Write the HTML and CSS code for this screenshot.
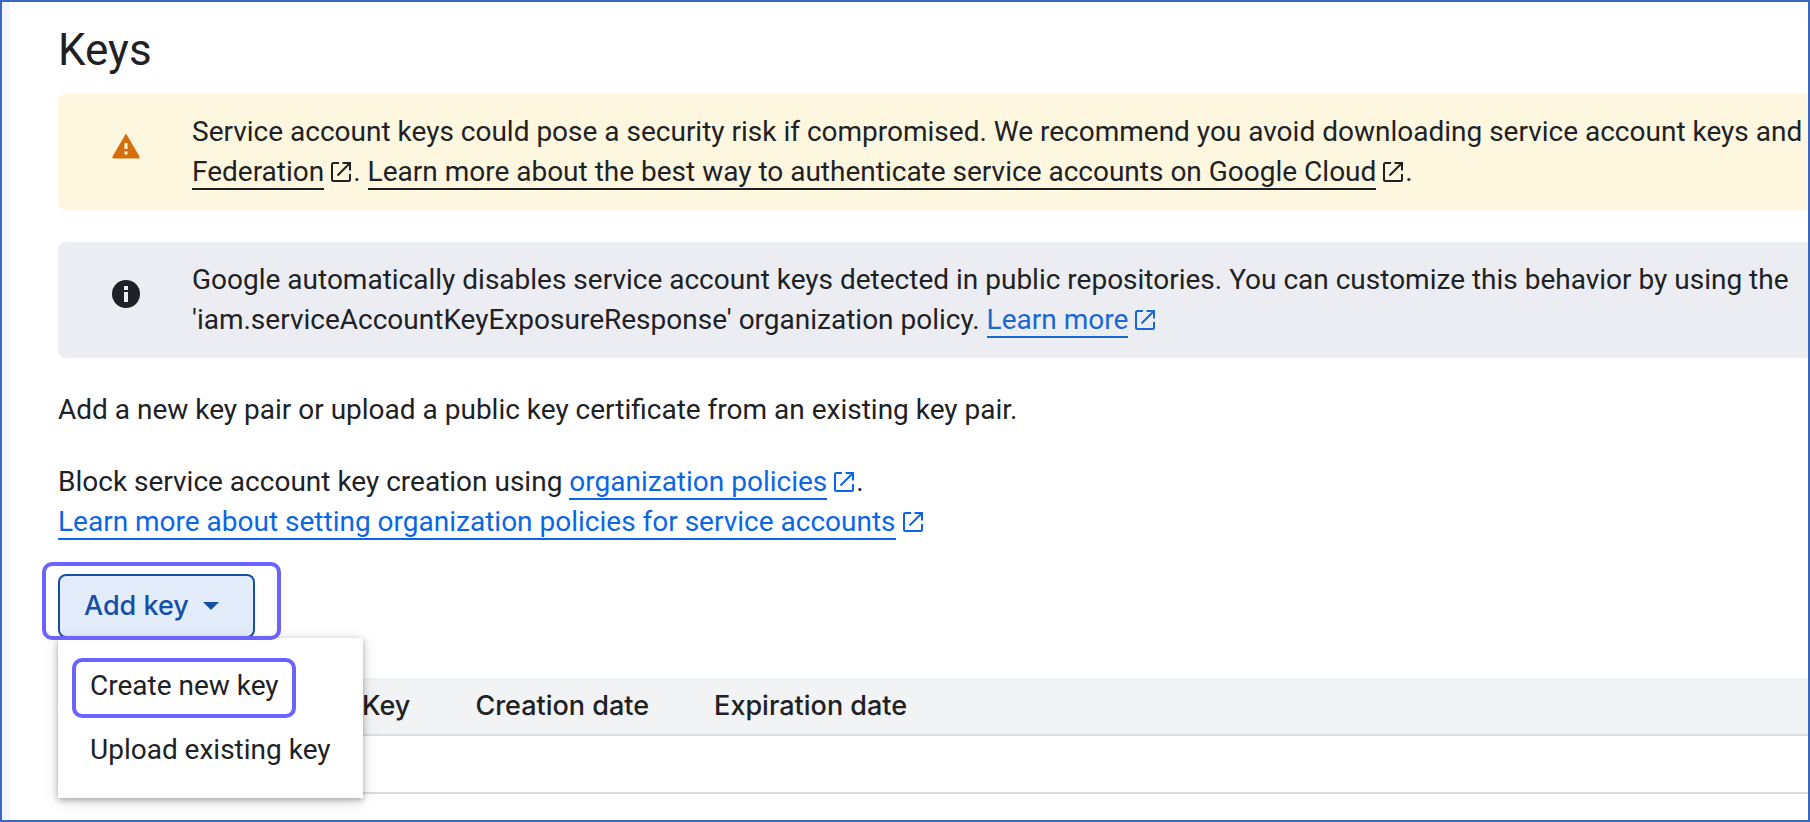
FILE: index.html
```html
<!DOCTYPE html>
<html lang="en">
<head>
    <meta charset="UTF-8">
    <meta name="viewport" content="width=device-width, initial-scale=1.0">
    <title>Keys</title>
    <link rel="stylesheet" href="styles.css">
</head>
<body>
    <!-- shared icon -->
    <svg class="sprite" aria-hidden="true">
        <symbol id="open-in-new" viewBox="0 0 20 20">
            <path d="M8 1H2.500Q1 1 1 2.500V17.500Q1 19 2.500 19H17.500Q19 19 19 17.500V12M11.500 1H19V8.500M19 1L6.500 13.500" fill="none" stroke="currentColor" stroke-width="2"/>
        </symbol>
    </svg>

    <main class="page">
        <h1>Keys</h1>

        <div class="notice warning">
            <svg class="notice-icon" viewBox="0 0 28 28" aria-hidden="true">
                <path d="M14 1.500L27.500 24.500Q28 26.500 26.500 26.500H1.500Q0 26.500.500 24.500Z" fill="#d56e0c"/>
                <path d="M12.500 11H15.500V17H12.500ZM12.500 19.500H15.500V22.500H12.500Z" fill="#fef7e0"/>
            </svg>
            <p>Service account keys could pose a security risk if compromised. We recommend you avoid downloading service account keys and<br>
            <a href="#">Federation</a><svg class="external"><use href="#open-in-new"/></svg>. <a href="#">Learn more about the best way to authenticate service accounts on Google Cloud</a><svg class="external"><use href="#open-in-new"/></svg>.</p>
        </div>

        <div class="notice info">
            <svg class="notice-icon" viewBox="0 0 28 28" aria-hidden="true">
                <circle cx="14" cy="14" r="14" fill="#202124"/>
                <path d="M12 6H16V10H12ZM12 12H16V22H12Z" fill="#ecedf3"/>
            </svg>
            <p>Google automatically disables service account keys detected in public repositories. You can customize this behavior by using the<br>
            'iam.serviceAccountKeyExposureResponse' organization policy. <a class="blue" href="#">Learn more</a><svg class="external blue"><use href="#open-in-new"/></svg></p>
        </div>

        <p class="text">Add a new key pair or upload a public key certificate from an existing key pair.</p>
        <p class="text">Block service account key creation using <a class="blue" href="#">organization policies</a><svg class="external blue"><use href="#open-in-new"/></svg>.<br>
        <a class="blue" href="#">Learn more about setting organization policies for service accounts</a><svg class="external blue"><use href="#open-in-new"/></svg></p>

        <div class="dropdown">
            <button type="button" class="add-key">Add key
                <svg class="caret" viewBox="0 0 16 8" aria-hidden="true"><path d="M0 0H16L8 8Z" fill="currentColor"/></svg>
            </button>
            <div class="menu">
                <button type="button" class="menu-item selected">Create new key</button>
                <button type="button" class="menu-item">Upload existing key</button>
            </div>
        </div>

        <table>
            <thead>
                <tr>
                    <th class="first"></th>
                    <th>Key</th>
                    <th>Creation date</th>
                    <th class="last">Expiration date</th>
                </tr>
            </thead>
            <tbody>
                <tr><td colspan="4"></td></tr>
            </tbody>
        </table>
    </main>
</body>
</html>
```

FILE: styles.css
```css
* {
    box-sizing: border-box;
}

body {
    margin: 0;
    font-family: Roboto, "Liberation Sans", sans-serif;
    font-size: 28px;
    line-height: 40px;
    color: #202124;
}

.sprite {
    position: absolute;
    width: 0;
    height: 0;
}

.page {
    min-height: 100vh;
    padding: 20px 0 0 56px;
    border: 2px solid #3b67c4;
    background: linear-gradient(to right, #f2f5fd 8px, #ffffff 8px);
    overflow: hidden;
}

h1 {
    margin: 0 0 16px;
    font-size: 44px;
    font-weight: 400;
    line-height: 56px;
}

p {
    margin: 0;
}

a {
    color: inherit;
    text-decoration: none;
    border-bottom: 2px solid currentColor;
}

.blue {
    color: #0b66e4;
}

.external {
    width: 20px;
    height: 20px;
    margin: 0 2px 0 7px;
    vertical-align: -1px;
}

.notice {
    display: flex;
    gap: 52px;
    margin-bottom: 32px;
    padding: 18px 0 18px 54px;
    border-radius: 8px 0 0 8px;
    white-space: nowrap;
}

.warning {
    background-color: #fef7e0;
}

.info {
    background-color: #ecedf3;
}

.info .blue {
    color: #1967d2;
}

.notice-icon {
    flex: none;
    width: 28px;
    height: 28px;
    margin-top: 20px;
}

.text {
    margin-bottom: 32px;
}

.dropdown {
    position: relative;
    width: max-content;
    margin-bottom: 40px;
}

button {
    font: inherit;
    color: inherit;
    cursor: pointer;
}

.add-key {
    display: flex;
    align-items: center;
    gap: 14px;
    height: 64px;
    padding: 0 34px 0 24px;
    border: 2px solid #174ea6;
    border-radius: 8px;
    background-color: #e2ecfb;
    color: #174ea6;
    font-family: Inter, sans-serif;
    font-size: 27px;
    font-weight: 500;
}

.caret {
    width: 16px;
    height: 8px;
}

/* highlight rings */
.dropdown::before,
.selected::before {
    content: "";
    position: absolute;
    z-index: 2;
    border: 4px solid #6c63ff;
    border-radius: 10px;
    pointer-events: none;
}

.dropdown::before {
    inset: -12px -26px -2px -16px;
}

.selected::before {
    inset: 4px 67px 0 14px;
}

.menu {
    position: absolute;
    top: 100%;
    left: 0;
    z-index: 1;
    padding: 16px 0;
    background-color: #ffffff;
    box-shadow: 0 2px 6px rgba(0, 0, 0, 0.3), 0 4px 16px rgba(0, 0, 0, 0.12);
}

.menu-item {
    position: relative;
    display: block;
    width: 100%;
    height: 64px;
    padding: 0 32px;
    border: none;
    background: none;
    text-align: left;
    white-space: nowrap;
}

table {
    width: 100%;
    border-spacing: 0;
}

th,
td {
    height: 58px;
    padding: 0 33px 0 32px;
    border-bottom: 2px solid #dadce0;
}

th {
    background-color: #f1f3f4;
    font-family: Inter, sans-serif;
    font-size: 27px;
    font-weight: 500;
    text-align: left;
    white-space: nowrap;
}

/* wide enough to clear the open menu */
.first {
    padding: 0 0 0 272px;
}

.last {
    width: 100%;
}
```
